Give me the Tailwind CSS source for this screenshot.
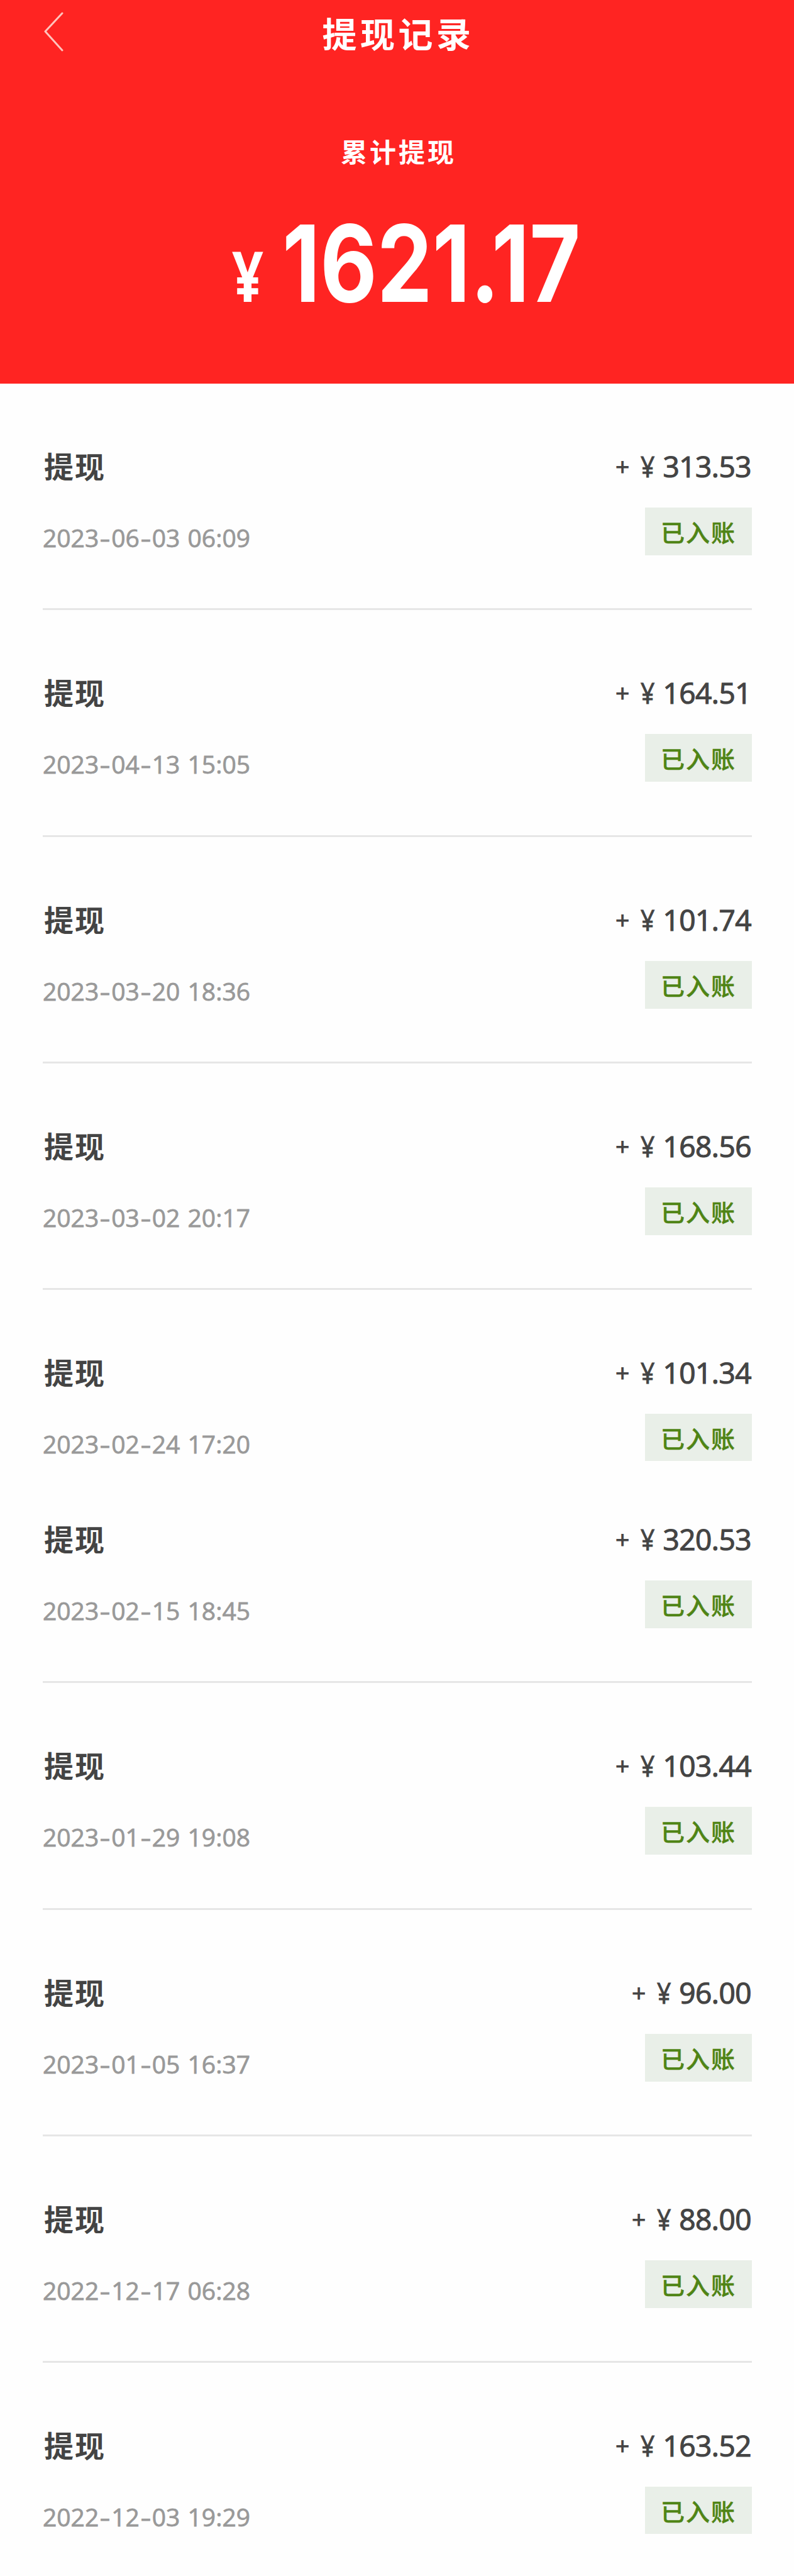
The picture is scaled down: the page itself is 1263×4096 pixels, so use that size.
<!DOCTYPE html>
<html lang="zh-CN">

<head>
    <meta charset="UTF-8">
    <title>提现记录</title>
    <meta name="viewport" content="width=device-width, initial-scale=1.0">
    <script src="https://cdn.jsdelivr.net/npm/@tailwindcss/browser@4"></script>
</head>

<body class="bg-[#fefefe] font-['Noto_Sans_CJK_SC',sans-serif] text-[#444]">
    <div class="h-[4096px] overflow-hidden">

        <header class="h-[610px] bg-[#ff2422] text-white">
            <div class="grid h-[102px] grid-cols-[1fr_auto_1fr] items-center">
                <svg class="ml-[68px] h-[64px] w-[34px]" viewBox="0 0 34 64" fill="none" stroke="#ffc4bc"
                    stroke-width="3" stroke-linecap="round" stroke-linejoin="round">
                    <path d="M31 2 L4 31 L31 61" />
                </svg>
                <h1 class="pl-[4px] text-[55px] leading-[102px] font-bold tracking-[5.5px]">提现记录</h1>
            </div>
            <div class="mt-[108px] pl-[5px] text-center text-[42px] leading-[60px] font-bold tracking-[4px]">累计提现</div>
            <div class="mt-[64px] flex items-baseline pl-[369px] font-['Inter',sans-serif] font-bold">
                <span class="w-[80px] font-['Open_Sans',sans-serif] text-[112px] leading-[170px] font-bold"><span
                        class="inline-block origin-left scale-x-[0.78]">¥</span></span>
                <span class="inline-block origin-left scale-x-[0.826] text-[169px] leading-[170px]">1621.17</span>
            </div>
        </header>

        <main id="records" class="mr-[67px] ml-[68px]"></main>
    </div>

    <script>
        // the list comes in two pages, there is no line under the last item of a page
        const pages = [
            [
                ['2023-06-03 06:09', '313.53'],
                ['2023-04-13 15:05', '164.51'],
                ['2023-03-20 18:36', '101.74'],
                ['2023-03-02 20:17', '168.56'],
                ['2023-02-24 17:20', '101.34'],
            ],
            [
                ['2023-02-15 18:45', '320.53'],
                ['2023-01-29 19:08', '103.44'],
                ['2023-01-05 16:37', '96.00'],
                ['2022-12-17 06:28', '88.00'],
                ['2022-12-03 19:29', '163.52'],
            ],
        ];

        const dash = '<span class="inline-block w-[20px] scale-x-[1.35] text-center">-</span>';

        pages.forEach(page => {
            page.forEach(([date, amount], i) => {
                const size = i === page.length - 1
                    ? 'h-[265px]'
                    : 'h-[360.3px] border-b-[3px] border-[#e6e6e6]';
                records.innerHTML += `
                    <div class="${size} flex justify-between pt-[95px]">
                        <div>
                            <div class="pl-[2px] text-[47px] leading-[70px] font-bold tracking-[2px]">提现</div>
                            <div class="mt-[45px] font-['Open_Sans',sans-serif] text-[39px] leading-[70px] text-[#999] [word-spacing:2px] [-webkit-text-stroke:0.8px_#999]">${date.replaceAll('-', dash)}</div>
                        </div>
                        <div class="flex flex-col items-end">
                            <div class="mt-[1px] mr-[1px] flex font-['Open_Sans',sans-serif] text-[46px] leading-[70px] font-medium [-webkit-text-stroke:1.2px_#444]">
                                <span class="w-[39px]"><span class="inline-block scale-[0.85]">+</span></span>
                                <span class="w-[27px] text-center"><span class="inline-block scale-x-[0.85]">¥</span></span>
                                <span class="ml-[11px] tracking-[-0.5px]">${amount}</span>
                            </div>
                            <div class="mt-[31px] h-[76px] w-[170px] bg-[#e9efe8] text-center text-[38px] leading-[75px] font-medium tracking-[2px] text-[#4f8415] [-webkit-text-stroke:0.5px_#4f8415]">已入账</div>
                        </div>
                    </div>`;
            });
        });
    </script>
</body>

</html>
